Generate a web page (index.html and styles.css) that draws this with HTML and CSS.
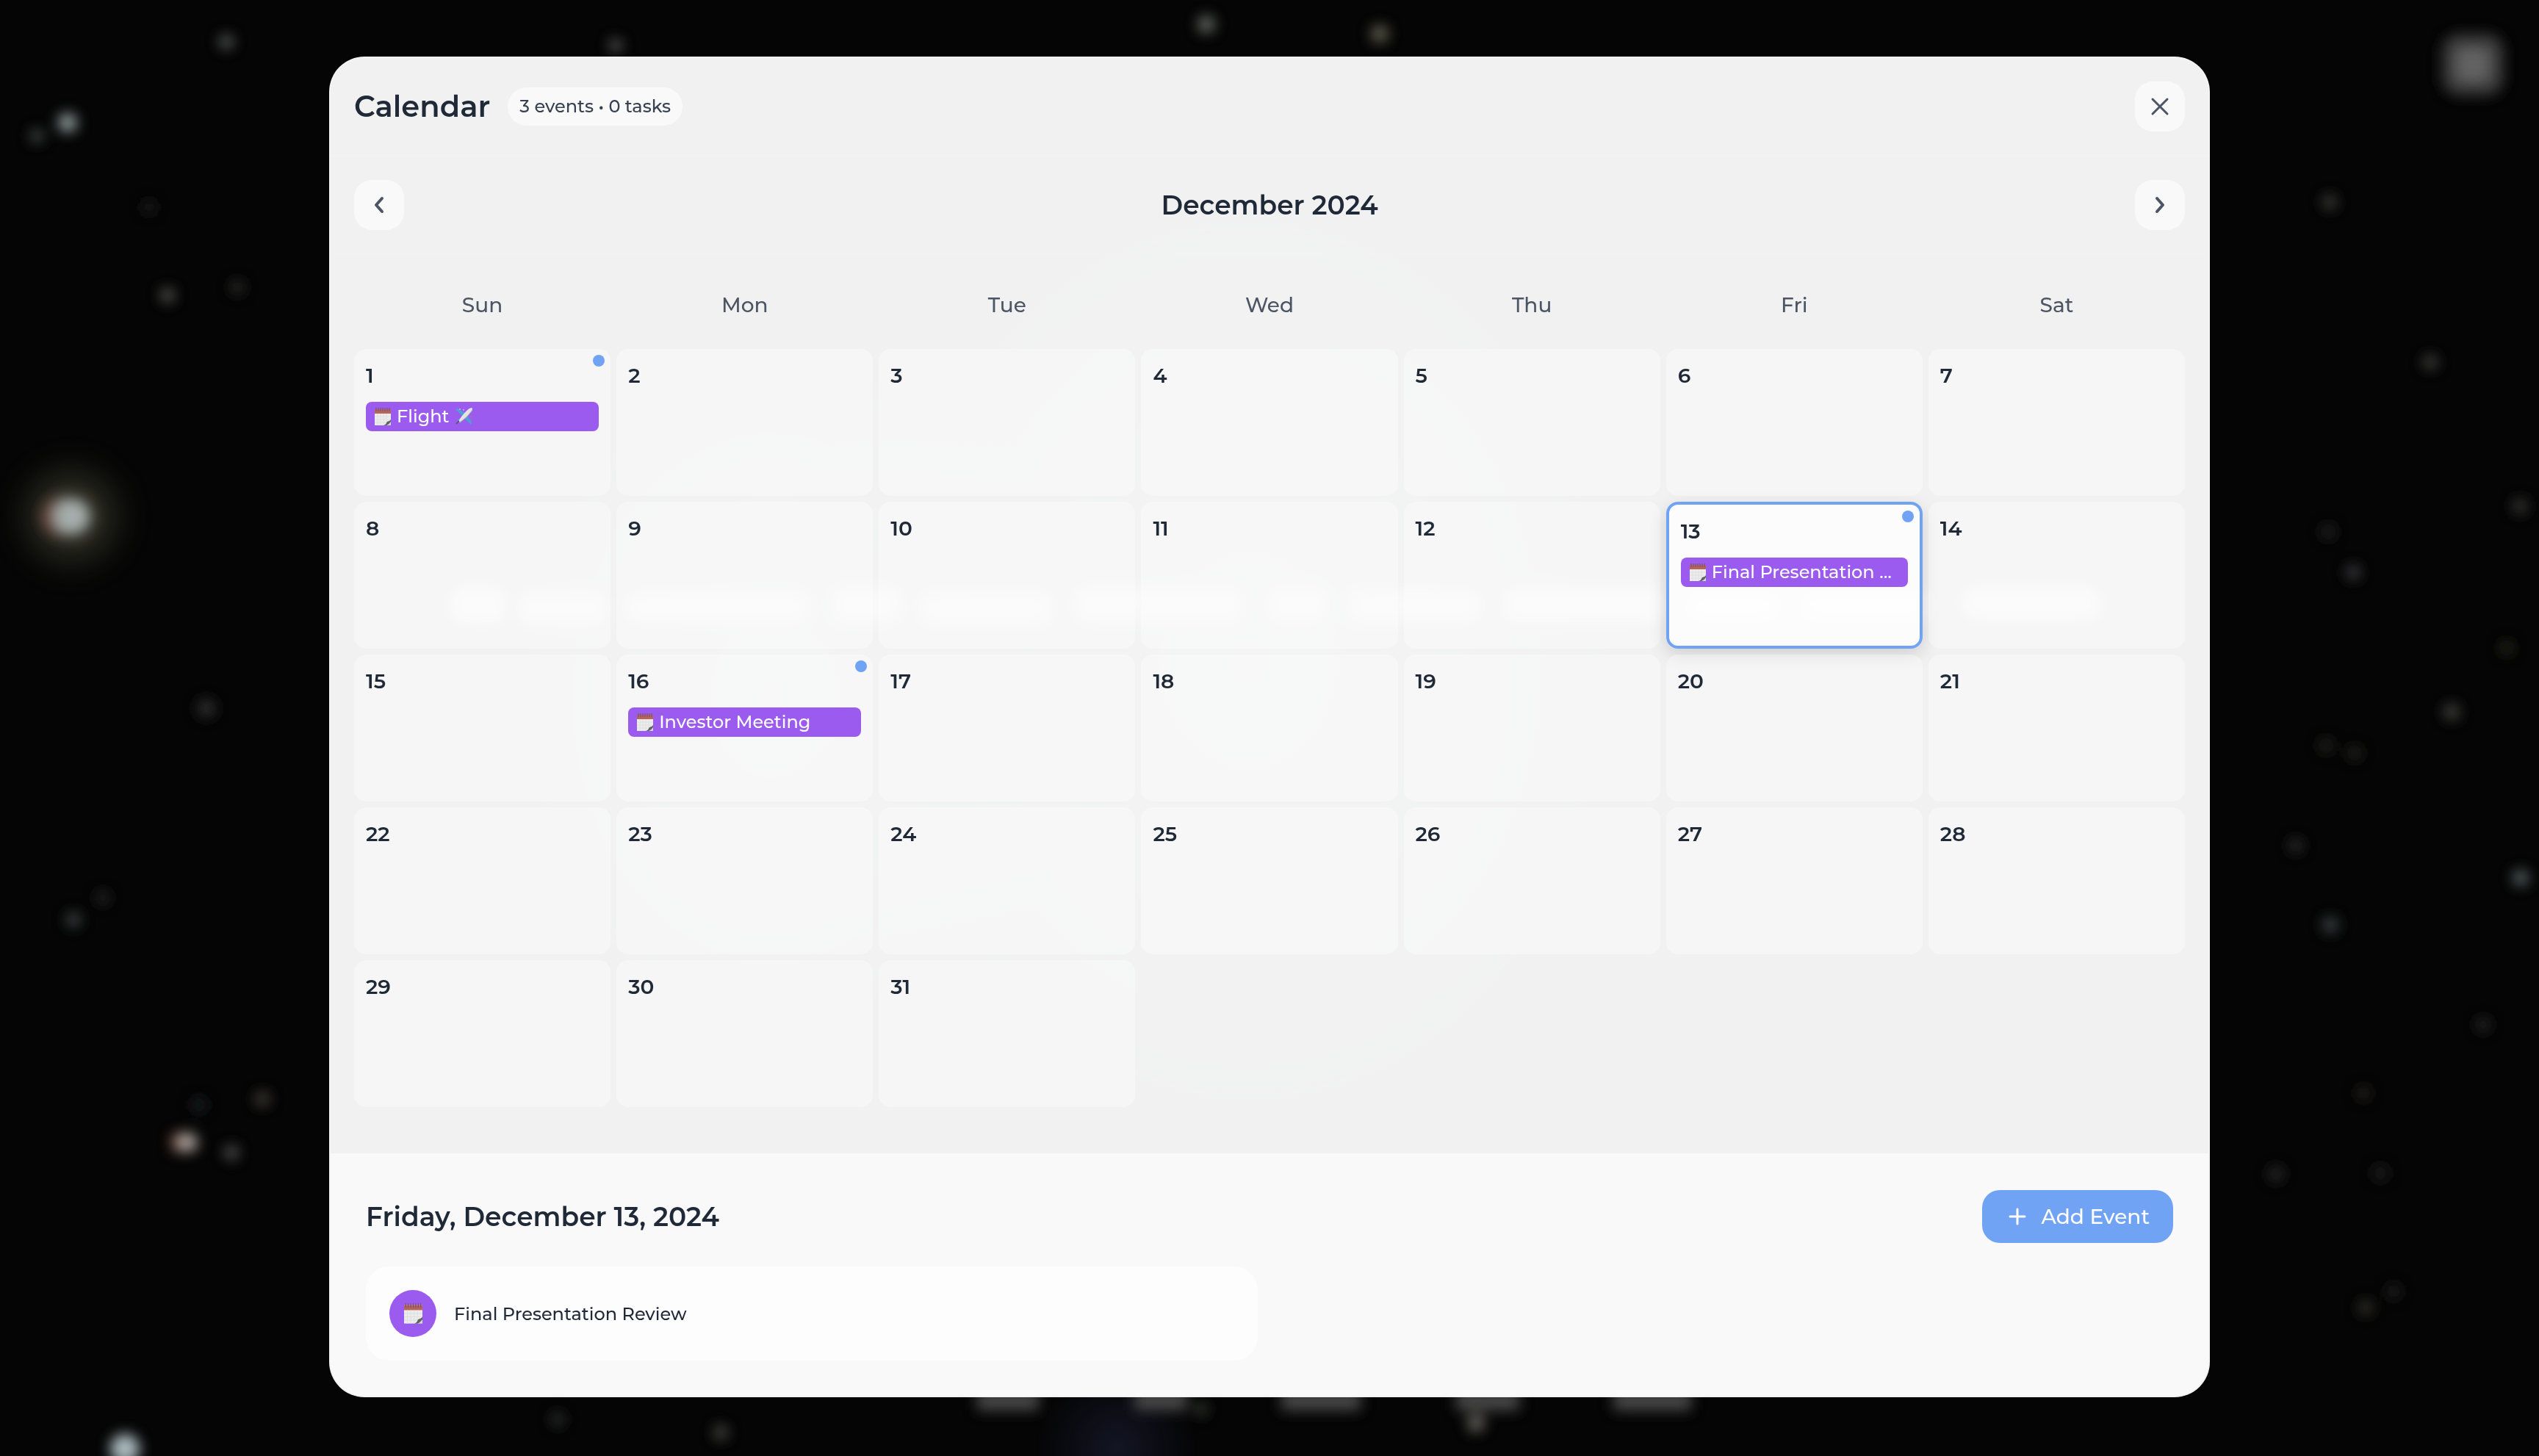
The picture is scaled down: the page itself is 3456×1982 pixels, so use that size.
FILE: index.html
```html
<!DOCTYPE html>
<html lang="en">
<head>
  <meta charset="UTF-8">
  <title>Calendar</title>
  <meta name="viewport" content="width=device-width, initial-scale=1">
  <link rel="stylesheet" href="styles.css">
</head>
<body>
  <!-- blurred desktop behind the modal -->
  <svg class="backdrop" viewBox="0 0 3456 1982" preserveAspectRatio="xMidYMid slice" aria-hidden="true">
    <defs>
      <filter id="soft" filterUnits="userSpaceOnUse" x="0" y="0" width="3456" height="1982"><feGaussianBlur stdDeviation="9"/></filter>
      <radialGradient id="halo">
        <stop offset="0" stop-color="#4a463c"/>
        <stop offset="0.4" stop-color="#23231c"/>
        <stop offset="1" stop-color="#050505" stop-opacity="0"/>
      </radialGradient>
      <radialGradient id="haze">
        <stop offset="0" stop-color="#3c4644" stop-opacity="0.9"/>
        <stop offset="1" stop-color="#3c4644" stop-opacity="0"/>
      </radialGradient>
      <radialGradient id="blue">
        <stop offset="0" stop-color="#131524"/>
        <stop offset="1" stop-color="#131524" stop-opacity="0"/>
      </radialGradient>
    </defs>
    <circle cx="97" cy="703" r="110" fill="url(#halo)"/>
    <circle cx="1520" cy="1970" r="110" fill="url(#blue)"/>
    <ellipse cx="1700" cy="900" rx="620" ry="760" fill="url(#haze)"/>
    <ellipse cx="1050" cy="950" rx="420" ry="560" fill="url(#haze)"/>
    <g filter="url(#soft)">
      <circle cx="82" cy="703" r="26" fill="#6a483e"/>
      <circle cx="98" cy="703" r="24" fill="#a4aeac"/>
      <circle cx="92" cy="167" r="13" fill="#909c9c"/>
      <circle cx="50" cy="185" r="9" fill="#4c5050"/>
      <circle cx="308" cy="57" r="10" fill="#585a5a"/>
      <circle cx="838" cy="62" r="9" fill="#5a5a5a"/>
      <circle cx="1642" cy="33" r="12" fill="#626760"/>
      <circle cx="1878" cy="46" r="12" fill="#625e50"/>
      <circle cx="203" cy="282" r="8" fill="#282828"/>
      <circle cx="228" cy="402" r="10" fill="#555550"/>
      <circle cx="323" cy="391" r="9" fill="#32322e"/>
      <circle cx="281" cy="964" r="12" fill="#303030"/>
      <circle cx="100" cy="1252" r="10" fill="#424848"/>
      <circle cx="140" cy="1222" r="8" fill="#303030"/>
      <circle cx="246" cy="1555" r="14" fill="#7b5240"/>
      <circle cx="256" cy="1555" r="13" fill="#aaa29e"/>
      <circle cx="315" cy="1569" r="10" fill="#525252"/>
      <circle cx="357" cy="1496" r="10" fill="#46423a"/>
      <circle cx="271" cy="1504" r="10" fill="#1c2426"/>
      <circle cx="170" cy="1972" r="20" fill="#aabac0"/>
      <circle cx="759" cy="1932" r="9" fill="#323434"/>
      <circle cx="981" cy="1950" r="10" fill="#4a4844"/>
      <circle cx="1635" cy="1918" r="9" fill="#343a36"/>
      <circle cx="2009" cy="1937" r="12" fill="#66645e"/>
      <circle cx="3171" cy="275" r="10" fill="#40403c"/>
      <circle cx="3308" cy="493" r="10" fill="#424240"/>
      <circle cx="3430" cy="689" r="10" fill="#3a3a38"/>
      <circle cx="3169" cy="724" r="9" fill="#2a2a2c"/>
      <circle cx="3203" cy="779" r="10" fill="#404042"/>
      <circle cx="3412" cy="882" r="9" fill="#2a2a1e"/>
      <circle cx="3337" cy="969" r="11" fill="#424240"/>
      <circle cx="3166" cy="1015" r="9" fill="#2a2a26"/>
      <circle cx="3205" cy="1025" r="9" fill="#2a2a26"/>
      <circle cx="3125" cy="1151" r="9" fill="#363634"/>
      <circle cx="3431" cy="1195" r="11" fill="#566060"/>
      <circle cx="3172" cy="1259" r="11" fill="#3c4444"/>
      <circle cx="3380" cy="1395" r="9" fill="#2e2e2e"/>
      <circle cx="3217" cy="1488" r="9" fill="#2a2620"/>
      <circle cx="3098" cy="1598" r="10" fill="#2e2e2e"/>
      <circle cx="3240" cy="1597" r="10" fill="#222"/>
      <circle cx="3258" cy="1758" r="9" fill="#282828"/>
      <circle cx="3220" cy="1780" r="10" fill="#36332a"/>
      <rect x="3324" y="46" width="84" height="84" rx="24" fill="#3a3a3a"/>
      <rect x="3344" y="66" width="44" height="44" rx="8" fill="#626262"/>
      <g fill="#464646">
        <rect x="1330" y="1892" width="84" height="28"/>
        <rect x="1544" y="1892" width="72" height="28"/>
        <rect x="1744" y="1892" width="108" height="28"/>
        <rect x="1982" y="1892" width="86" height="28"/>
        <rect x="2196" y="1892" width="106" height="28"/>
      </g>
      <!-- quote line -->
      <g fill="#8a8a8a">
        <rect x="612" y="798" width="76" height="50" rx="20"/>
        <rect x="706" y="806" width="120" height="44" rx="20"/>
        <rect x="852" y="806" width="250" height="40" rx="20"/>
        <rect x="1134" y="800" width="92" height="46" rx="20"/>
        <rect x="1252" y="806" width="180" height="44" rx="20"/>
        <rect x="1462" y="800" width="230" height="46" rx="20"/>
        <rect x="1726" y="800" width="80" height="46" rx="20"/>
        <rect x="1836" y="804" width="180" height="42" rx="20"/>
        <rect x="2046" y="800" width="220" height="46" rx="20"/>
        <rect x="2294" y="804" width="130" height="42" rx="20"/>
        <rect x="2450" y="804" width="180" height="42" rx="20"/>
        <rect x="2670" y="798" width="190" height="46" rx="20"/>
      </g>
    </g>
  </svg>

  <!-- shared icons -->
  <svg class="sprite" aria-hidden="true">
    <symbol id="ico-calendar" viewBox="0 0 22 24">
      <path d="M0 2h22v22H0z" fill="#ededed"/>
      <path d="M0 2h22v6H0z" fill="#b5655c"/>
      <path d="M2 0v5M5 0v5M8 0v5M11 0v5M14 0v5M17 0v5M20 0v5" stroke="#77506a" stroke-width="1"/>
      <path d="M0 12h22M0 16h22M0 20h22M4 8v16M8 8v16M12 8v16M16 8v16" stroke="#e0e0e0" stroke-width="1"/>
      <path d="M12 24c4-1 4-4 5-5 2-1 4-1 5-3v8z" fill="#5f6460"/>
      <path d="M16 24c3-1 4-3 6-5v5z" fill="#d5d5d5"/>
    </symbol>
    <symbol id="ico-plane" viewBox="0 0 24 24">
      <path d="M1 2l3-1 11 7-4 4z" fill="#4ba0d8"/>
      <path d="M22 23l1-3-7-11-4 4z" fill="#4ba0d8"/>
      <path d="M1 16l5-1 2 2zM8 23l1-5-2-2z" fill="#4ba0d8"/>
      <path d="M5 20C4 18 14 5 20 1c2-1 4-1 4 0 0 2 0 3-2 5C18 12 7 21 5 20z" fill="#e4e4e6"/>
      <path d="M6 20C11 17 19 10 24 2c0 2-1 3-2 4C18 12 8 21 6 20z" fill="#a9a9ae"/>
      <path d="M2 22l4-4" stroke="#66507e" stroke-width="2"/>
      <circle cx="7" cy="2" r="1" fill="#c9b9d8"/><circle cx="12" cy="3" r="1" fill="#c9b9d8"/>
      <circle cx="22" cy="12" r="1" fill="#8f8398"/><circle cx="22" cy="17" r="1" fill="#8f8398"/>
    </symbol>
  </svg>

  <div class="overlay">
    <div class="modal" role="dialog" aria-labelledby="modal-title">
      <header class="modal-header">
        <div class="title-group">
          <h1 id="modal-title">Calendar</h1>
          <span class="count-badge">3 events • 0 tasks</span>
        </div>
        <button type="button" class="icon-btn" aria-label="Close">
          <svg width="40" height="40" viewBox="0 0 40 40"><path d="M10 10l20 20M30 10L10 30"/></svg>
        </button>
      </header>

      <div class="month-nav">
        <button type="button" class="icon-btn" aria-label="Previous month">
          <svg width="36" height="36" viewBox="0 0 36 36"><path d="M22 9l-8 9 8 9"/></svg>
        </button>
        <h2>December 2024</h2>
        <button type="button" class="icon-btn" aria-label="Next month">
          <svg width="36" height="36" viewBox="0 0 36 36"><path d="M14 9l8 9-8 9"/></svg>
        </button>
      </div>

      <div class="calendar">
        <div class="weekdays">
          <div>Sun</div><div>Mon</div><div>Tue</div><div>Wed</div><div>Thu</div><div>Fri</div><div>Sat</div>
        </div>
        <div class="days" id="days"></div>
      </div>

      <section class="day-panel">
        <div class="panel-header">
          <h2>Friday, December 13, 2024</h2>
          <button type="button" class="add-btn">
            <svg width="32" height="32" viewBox="0 0 32 32"><path d="M16 6v20M6 16h20"/></svg>
            Add Event
          </button>
        </div>
        <div class="event-list">
          <div class="event-card">
            <span class="event-icon"><svg width="25" height="28"><use href="#ico-calendar"/></svg></span>
            <span>Final Presentation Review</span>
          </div>
        </div>
      </section>
    </div>
  </div>

  <script>
    const events = {
      1: 'Flight',
      13: 'Final Presentation Review',
      16: 'Investor Meeting'
    };
    const selected = 13;
    const calIcon = '<svg width="22" height="24"><use href="#ico-calendar"/></svg>';
    const planeIcon = '<svg width="24" height="24"><use href="#ico-plane"/></svg>';

    let html = '';
    for (let d = 1; d <= 31; d++) {
      html += `<button type="button" class="day${d === selected ? ' selected' : ''}"><span class="num">${d}</span>`;
      if (events[d]) {
        html += `<span class="dot"></span>
          <span class="event">${calIcon}<span class="event-title">${events[d]}</span>${d === 1 ? planeIcon : ''}</span>`;
      }
      html += '</button>';
    }
    document.getElementById('days').innerHTML = html;
  </script>
</body>
</html>
```
FILE: styles.css
```css
* {
  box-sizing: border-box;
}
body {
  margin: 0;
  min-height: 100vh;
  background: #050505;
  color: #1f2937;
  font-family: Montserrat, Inter, "Liberation Sans", sans-serif;
}
h1, h2 {
  margin: 0;
  font-weight: 600;
}
button {
  border: none;
  padding: 0;
  font: inherit;
  color: inherit;
  cursor: pointer;
}
.backdrop {
  position: fixed;
  inset: 0;
  width: 100%;
  height: 100%;
}
.sprite {
  position: absolute;
  width: 0;
  height: 0;
}
.overlay {
  position: relative;
  display: flex;
  justify-content: center;
  min-height: 100vh;
  padding: 77px 32px 80px;
}
.modal {
  display: flex;
  flex-direction: column;
  width: 100%;
  max-width: 2560px;
  background: rgba(255, 255, 255, 0.945);
  border: 2px solid rgba(255, 255, 255, 0.2);
  border-radius: 48px;
  overflow: hidden;
}
.modal-header, .month-nav {
  display: flex;
  align-items: center;
  justify-content: space-between;
  padding: 32px;
  border-bottom: 2px solid rgba(255, 255, 255, 0.1);
}
.title-group {
  display: flex;
  align-items: center;
  gap: 24px;
}
h1 {
  font-size: 40px;
  line-height: 56px;
}
.count-badge {
  padding: 8px 16px;
  border-radius: 26px;
  background: rgba(255, 255, 255, 0.6);
  color: #374151;
  font-size: 24px;
  font-weight: 500;
  line-height: 36px;
}
.icon-btn {
  display: flex;
  align-items: center;
  justify-content: center;
  width: 68px;
  height: 68px;
  border-radius: 24px;
  background: rgba(255, 255, 255, 0.6);
}
.icon-btn svg, .add-btn svg {
  fill: none;
  stroke: #4b5563;
  stroke-width: 3;
  stroke-linecap: round;
  stroke-linejoin: round;
}
.month-nav .icon-btn svg {
  stroke-width: 4;
}
h2 {
  font-size: 36px;
  line-height: 56px;
}
.calendar {
  flex: 1;
  padding: 32px;
}
.weekdays, .days {
  display: grid;
  grid-template-columns: repeat(7, 1fr);
  gap: 8px;
}
.weekdays {
  margin-bottom: 24px;
}
.weekdays div {
  padding: 16px 0;
  text-align: center;
  color: #4b5563;
  font-size: 28px;
  font-weight: 500;
  line-height: 40px;
}
.day {
  position: relative;
  display: flex;
  flex-direction: column;
  gap: 16px;
  min-width: 0;
  height: 200px;
  padding: 16px;
  border-radius: 16px;
  background: rgba(255, 255, 255, 0.35);
  text-align: left;
}
.day.selected {
  border: 4px solid #71a3f5;
  background: rgba(255, 255, 255, 0.8);
  box-shadow: 0 8px 24px rgba(0, 0, 0, 0.14);
}
.num {
  font-size: 28px;
  font-weight: 600;
  line-height: 40px;
}
.dot {
  position: absolute;
  top: 8px;
  right: 8px;
  width: 16px;
  height: 16px;
  border-radius: 50%;
  background: #71a3f5;
}
.event {
  display: flex;
  align-items: center;
  gap: 8px;
  padding: 4px 12px;
  border-radius: 8px;
  background: #9b5bee;
  color: #fff;
  font-size: 24px;
  font-weight: 500;
  line-height: 32px;
}
.event svg {
  flex: none;
}
.event-title {
  overflow: hidden;
  text-overflow: ellipsis;
  white-space: nowrap;
}
.day-panel {
  padding: 48px;
  border-top: 2px solid rgba(255, 255, 255, 0.2);
  background: rgba(255, 255, 255, 0.6);
}
.panel-header {
  display: flex;
  align-items: center;
  justify-content: space-between;
  margin-bottom: 32px;
}
.add-btn {
  display: flex;
  align-items: center;
  gap: 16px;
  height: 72px;
  padding: 0 32px;
  border-radius: 24px;
  background: #71a3f5;
  color: #fff;
  font-size: 28px;
  font-weight: 500;
}
.add-btn svg {
  stroke: #fff;
}
.event-list {
  display: grid;
  grid-template-columns: 1fr 1fr;
  gap: 32px;
}
.event-card {
  display: flex;
  align-items: center;
  gap: 24px;
  padding: 32px;
  border-radius: 32px;
  background: rgba(255, 255, 255, 0.6);
  font-size: 24px;
  font-weight: 500;
}
.event-icon {
  display: flex;
  align-items: center;
  justify-content: center;
  width: 64px;
  height: 64px;
  border-radius: 50%;
  background: #9b5bee;
}
```
